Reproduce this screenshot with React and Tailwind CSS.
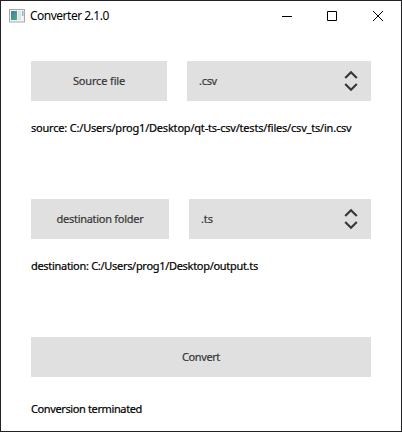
function Chevrons() {
  return (
    <svg width="14" height="22" viewBox="0 0 14 22" fill="none" stroke="#383838" strokeWidth="2.2" className="shrink-0">
      <path d="M1.2 8 7 2.2 12.8 8M1.2 14 7 19.8 12.8 14" />
    </svg>
  );
}

function AppIcon() {
  return (
    <svg width="16" height="14" viewBox="0 0 16 14" className="shrink-0">
      <defs>
        <linearGradient id="pane" x1="0" y1="0" x2="1" y2="1">
          <stop offset="0" stopColor="#4679a8" />
          <stop offset="1" stopColor="#48b278" />
        </linearGradient>
      </defs>
      <rect x="0.5" y="0.5" width="15" height="12.5" fill="#f2f2f2" stroke="#a5a9ad" />
      <rect x="2" y="2" width="6" height="9" fill="url(#pane)" />
      <rect x="9" y="2" width="3" height="9" fill="#e2e2e2" />
      <rect x="13" y="2" width="1.5" height="5" fill="url(#pane)" opacity="0.6" />
    </svg>
  );
}

const button = "flex h-10 items-center justify-center bg-[#e0e0e0] text-[#373737]";
const select = "flex h-10 items-center justify-between bg-[#e0e0e0] pl-3 pr-[13px] text-[#373737]";

export default function App() {
  return (
    <div className="flex h-[432px] w-[402px] flex-col border border-[#232125] bg-white font-['Noto_Sans',sans-serif] text-[11px] leading-4 whitespace-nowrap text-black [-webkit-text-stroke:0.2px]">
      <header className="flex h-[29px] shrink-0 items-center pl-2">
        <AppIcon />
        <span className="ml-[5px] text-xs tracking-[-0.5px] [-webkit-text-stroke:0px]">Converter 2.1.0</span>
        <div className="ml-auto flex items-center">
          <svg width="122" height="12" viewBox="0 0 122 12" fill="none" stroke="#000" className="mr-3.5">
            <path d="M17 6.5h10M62.5 1.5h9v9h-9z" />
            <path d="m108 1 10 10M118 1l-10 10" />
          </svg>
        </div>
      </header>
      <main className="flex flex-col pl-[30px] pr-[30px] pt-[31px]">
        <div className="flex gap-5">
          <button className={`${button} w-[136px]`}><span className="tracking-[-0.15px]">Source file</span></button>
          <div className={`${select} grow`}><span className="tracking-[-0.3px]">.csv</span><Chevrons /></div>
        </div>
        <p className="mt-[19px]"><span className="tracking-[-0.2px]">source: C:/Users/prog1/Desktop/qt-ts-csv/tests/files/csv_ts/in.csv</span></p>
        <div className="mt-[63px] flex gap-5">
          <button className={`${button} w-[138px]`}><span className="tracking-[-0.28px]">destination folder</span></button>
          <div className={`${select} grow`}><span className="tracking-[-0.1px]">.ts</span><Chevrons /></div>
        </div>
        <p className="mt-[19px]"><span className="tracking-[-0.3px]">destination: C:/Users/prog1/Desktop/output.ts</span></p>
        <button className={`${button} mt-[63px]`}><span className="tracking-[-0.4px]">Convert</span></button>
        <p className="mt-6"><span className="tracking-[-0.38px]">Conversion terminated</span></p>
      </main>
    </div>
  );
}
